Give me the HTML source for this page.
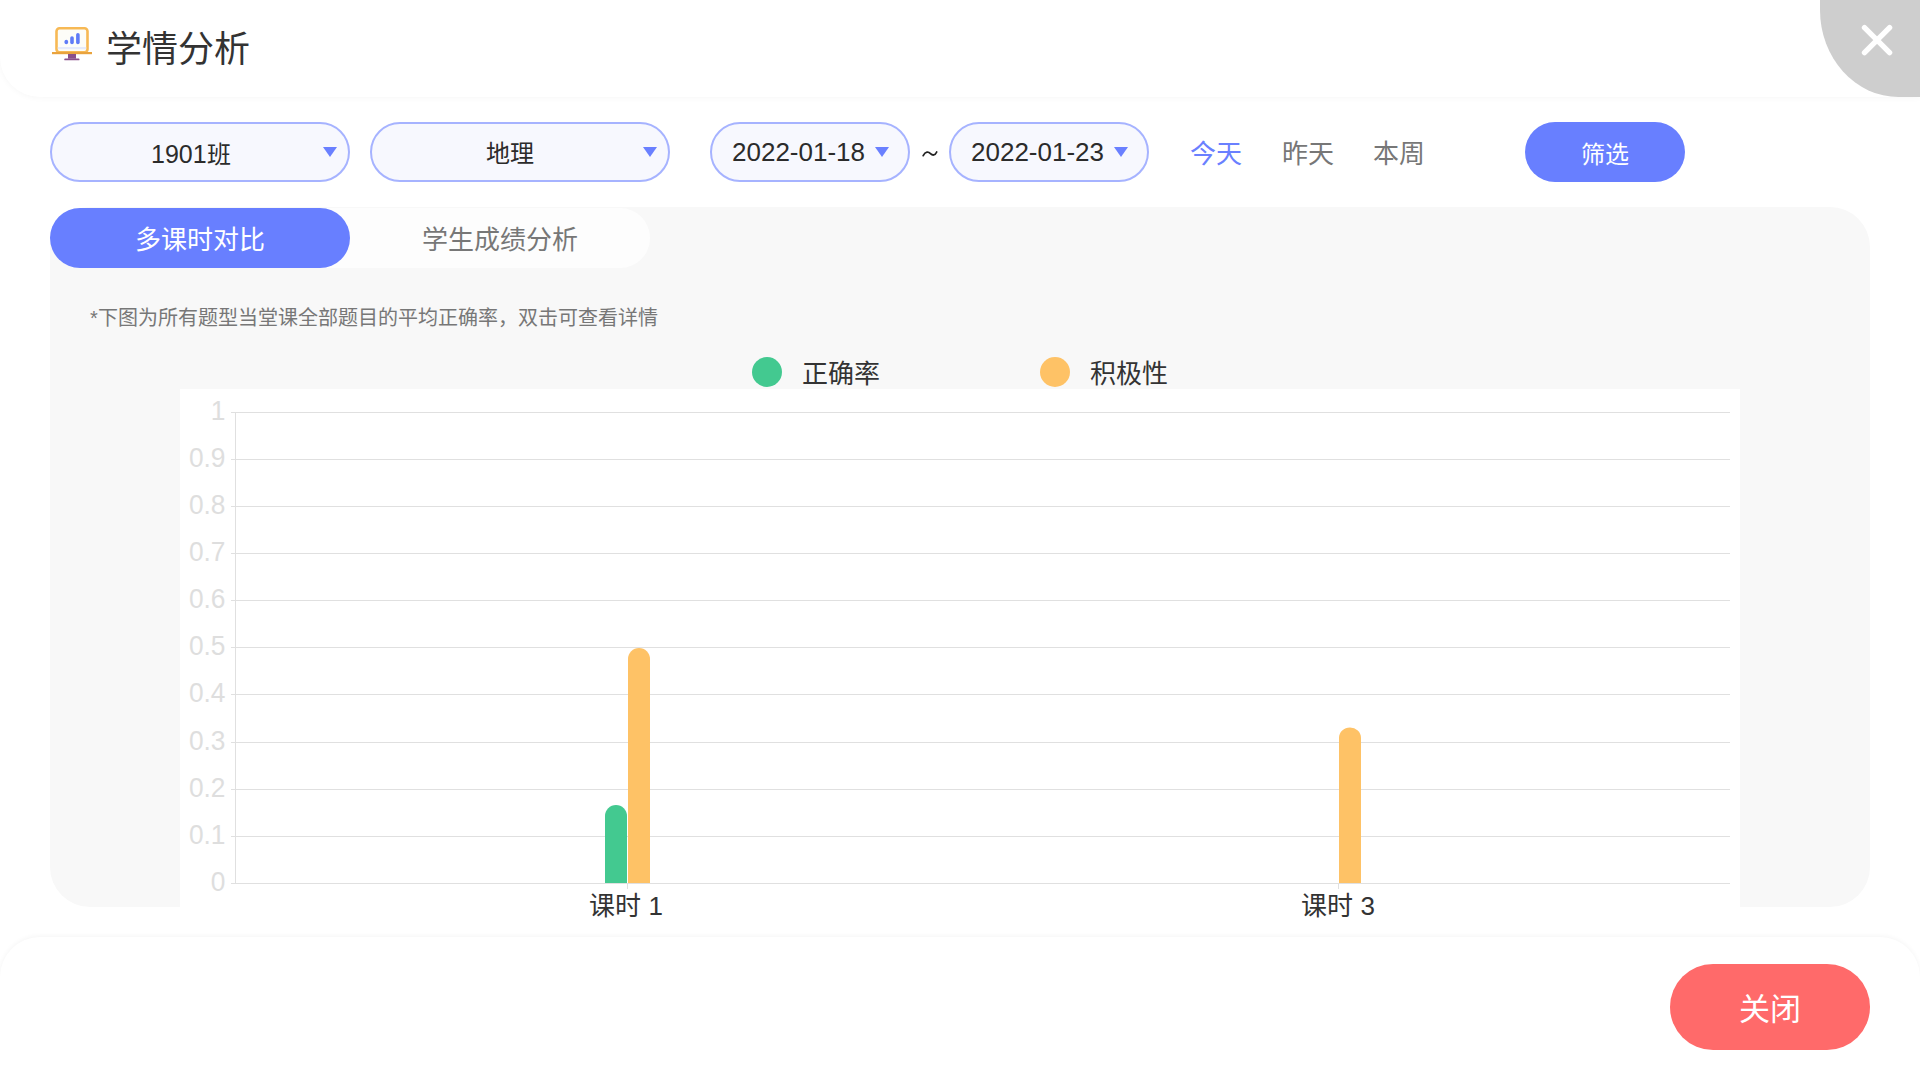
<!DOCTYPE html>
<html lang="zh-CN"><head><meta charset="utf-8">
<style>
*{margin:0;padding:0;box-sizing:border-box}
html,body{width:1920px;height:1074px;overflow:hidden;background:#fff;font-family:"Liberation Sans",sans-serif;font-weight:500}
.abs{position:absolute}
#header{left:0;top:0;width:1920px;height:97px;background:#fff;border-bottom-left-radius:40px;box-shadow:0 1px 6px rgba(0,0,0,0.035)}
#title{left:106px;top:26px;font-size:36px;line-height:48px;color:#333;white-space:nowrap}
#closex{left:1820px;top:0;width:100px;height:97px;background:#cecece;border-bottom-left-radius:78.5px 87px}
.pill{height:60px;top:122px;border:2px solid #a6b3ff;background:#f7f8fe;border-radius:30px;font-size:24px;color:#2b2b2b;line-height:56px;white-space:nowrap}
.pill span{position:absolute}
.tri{position:absolute;width:0;height:0;border-left:7px solid transparent;border-right:7px solid transparent;border-top:10px solid #6a80ff;top:23px}
.quick{top:134px;font-size:26px;line-height:40px;color:#777;white-space:nowrap}
#filter{left:1525px;top:122px;width:160px;height:60px;background:#687fff;border-radius:30px;color:#fff;font-size:24px;line-height:66px;text-align:center}
#panel{left:50px;top:207px;width:1820px;height:700px;background:#f8f8f8;border-radius:40px}
#tabs{left:50px;top:208px;width:600px;height:60px;background:#fdfdfd;border-radius:30px}
#tab1{left:50px;top:208px;width:300px;height:60px;background:#687fff;border-radius:30px;color:#fff;font-size:26px;line-height:65px;text-align:center}
#tab2{left:350px;top:208px;width:300px;height:60px;color:#777;font-size:26px;line-height:65px;text-align:center}
#note{left:90px;top:303px;font-size:20px;line-height:30px;color:#777;white-space:nowrap}
.dot{width:30px;height:30px;border-radius:50%;top:357px}
.leg{top:356px;font-size:26px;line-height:36px;color:#333;white-space:nowrap}
#chart{left:180px;top:389px;width:1560px;height:518px;background:#fff}
#footer{left:0;top:937px;width:1920px;height:138px;background:#fff;border-radius:40px 40px 0 0;box-shadow:0 -1px 5px rgba(0,0,0,0.045)}
#close{left:1670px;top:964px;width:200px;height:86px;background:#ff6a6a;border-radius:43px;color:#fff;font-size:31px;line-height:92px;text-align:center}
</style></head><body>
<div id="header" class="abs"></div>
<svg class="abs" style="left:50px;top:24px" width="44" height="40" viewBox="0 0 44 40">
  <rect x="6.5" y="4.2" width="31" height="24" rx="3" fill="#fdfdf8" stroke="#f7b955" stroke-width="2.6"/>
  <rect x="7.8" y="23" width="28.4" height="2.2" fill="#e6ebfb"/>
  <rect x="2" y="28" width="40" height="2.2" fill="#e9a33d"/>
  <rect x="18" y="30" width="8" height="4.7" fill="#8a4f8a"/>
  <rect x="14.2" y="34.5" width="15.3" height="1.8" rx="0.9" fill="#8a4f8a"/>
  <line x1="16.3" y1="17.5" x2="16.3" y2="18.5" stroke="#5f7bf7" stroke-width="3.6" stroke-linecap="round"/>
  <line x1="22" y1="14.1" x2="22" y2="18.5" stroke="#5f7bf7" stroke-width="3.6" stroke-linecap="round"/>
  <line x1="27.9" y1="10.8" x2="27.9" y2="18.5" stroke="#5f7bf7" stroke-width="3.6" stroke-linecap="round"/>
</svg>
<div id="title" class="abs">学情分析</div>
<div id="closex" class="abs"></div>
<svg class="abs" style="left:1858px;top:23px" width="38" height="34" viewBox="0 0 38 34">
  <path d="M6.5 4.6 L31.6 29.6 M31.6 4.6 L6.5 29.6" stroke="#fff" stroke-width="5.4" stroke-linecap="round"/>
</svg>

<div class="pill abs" style="left:50px;width:300px"><span style="left:99px;top:2px"><b style="font-weight:normal;font-size:25px">1901</b>班</span><i class="tri" style="left:271px"></i></div>
<div class="pill abs" style="left:370px;width:300px"><span style="left:114px;top:2px">地理</span><i class="tri" style="left:271px"></i></div>
<div class="pill abs" style="left:710px;width:200px"><span style="left:20px;top:0px;font-size:26px">2022-01-18</span><i class="tri" style="left:163px"></i></div>
<svg class="abs" style="left:918px;top:146px" width="24" height="14" viewBox="0 0 24 14"><path d="M5.2 9.6 C7.5 5.2 10.5 5.6 12.5 7.6 C14.5 9.6 17 9.8 18.7 6" fill="none" stroke="#222" stroke-width="1.8" stroke-linecap="round"/></svg>
<div class="pill abs" style="left:949px;width:200px"><span style="left:20px;top:0px;font-size:26px">2022-01-23</span><i class="tri" style="left:163px"></i></div>
<div class="quick abs" style="left:1190px;color:#6a80ff">今天</div>
<div class="quick abs" style="left:1282px">昨天</div>
<div class="quick abs" style="left:1373px">本周</div>
<div id="filter" class="abs">筛选</div>

<div id="panel" class="abs"></div>
<div id="tabs" class="abs"></div>
<div id="tab1" class="abs">多课时对比</div>
<div id="tab2" class="abs">学生成绩分析</div>
<div id="note" class="abs">*下图为所有题型当堂课全部题目的平均正确率，双击可查看详情</div>
<div class="dot abs" style="left:752px;background:#43c990"></div>
<div class="leg abs" style="left:802px">正确率</div>
<div class="dot abs" style="left:1040px;background:#fec266"></div>
<div class="leg abs" style="left:1090px">积极性</div>

<div id="chart" class="abs"></div>
<svg class="abs" style="left:0;top:0;font-weight:500" width="1920" height="1074">
  <g stroke="#e0e0e0" stroke-width="1" shape-rendering="crispEdges">
    <line x1="231" y1="412.5" x2="1730" y2="412.5"/>
    <line x1="231" y1="459.5" x2="1730" y2="459.5"/>
    <line x1="231" y1="506.5" x2="1730" y2="506.5"/>
    <line x1="231" y1="553.5" x2="1730" y2="553.5"/>
    <line x1="231" y1="600.5" x2="1730" y2="600.5"/>
    <line x1="231" y1="647.5" x2="1730" y2="647.5"/>
    <line x1="231" y1="694.5" x2="1730" y2="694.5"/>
    <line x1="231" y1="742.5" x2="1730" y2="742.5"/>
    <line x1="231" y1="789.5" x2="1730" y2="789.5"/>
    <line x1="231" y1="836.5" x2="1730" y2="836.5"/>
    <line x1="231" y1="883.5" x2="1730" y2="883.5"/>
    <line x1="235.5" y1="412" x2="235.5" y2="884"/>
    <line x1="627.5" y1="884" x2="627.5" y2="889"/>
    <line x1="1338.5" y1="884" x2="1338.5" y2="889"/>
  </g>
  <path d="M605 883 V816 A11 11 0 0 1 627 816 V883 Z" fill="#43c990"/>
  <path d="M628 883 V659 A11 11 0 0 1 650 659 V883 Z" fill="#fec266"/>
  <path d="M1339 883 V738 A11 10.5 0 0 1 1361 738 V883 Z" fill="#fec266"/>
  <g font-family="Liberation Sans, sans-serif" font-size="28" fill="#dedede" text-anchor="end">
    <text transform="translate(225.5,420) scale(0.94,1)">1</text>
    <text transform="translate(225.5,467) scale(0.94,1)">0.9</text>
    <text transform="translate(225.5,514) scale(0.94,1)">0.8</text>
    <text transform="translate(225.5,561) scale(0.94,1)">0.7</text>
    <text transform="translate(225.5,608) scale(0.94,1)">0.6</text>
    <text transform="translate(225.5,655) scale(0.94,1)">0.5</text>
    <text transform="translate(225.5,702) scale(0.94,1)">0.4</text>
    <text transform="translate(225.5,750) scale(0.94,1)">0.3</text>
    <text transform="translate(225.5,797) scale(0.94,1)">0.2</text>
    <text transform="translate(225.5,844) scale(0.94,1)">0.1</text>
    <text transform="translate(225.5,891) scale(0.94,1)">0</text>
  </g>
  <g font-family="Liberation Sans, sans-serif" font-size="26" fill="#333" text-anchor="middle">
    <text x="626" y="915">课时 1</text>
    <text x="1338" y="915">课时 3</text>
  </g>
</svg>

<div id="footer" class="abs"></div>
<div id="close" class="abs">关闭</div>
</body></html>
